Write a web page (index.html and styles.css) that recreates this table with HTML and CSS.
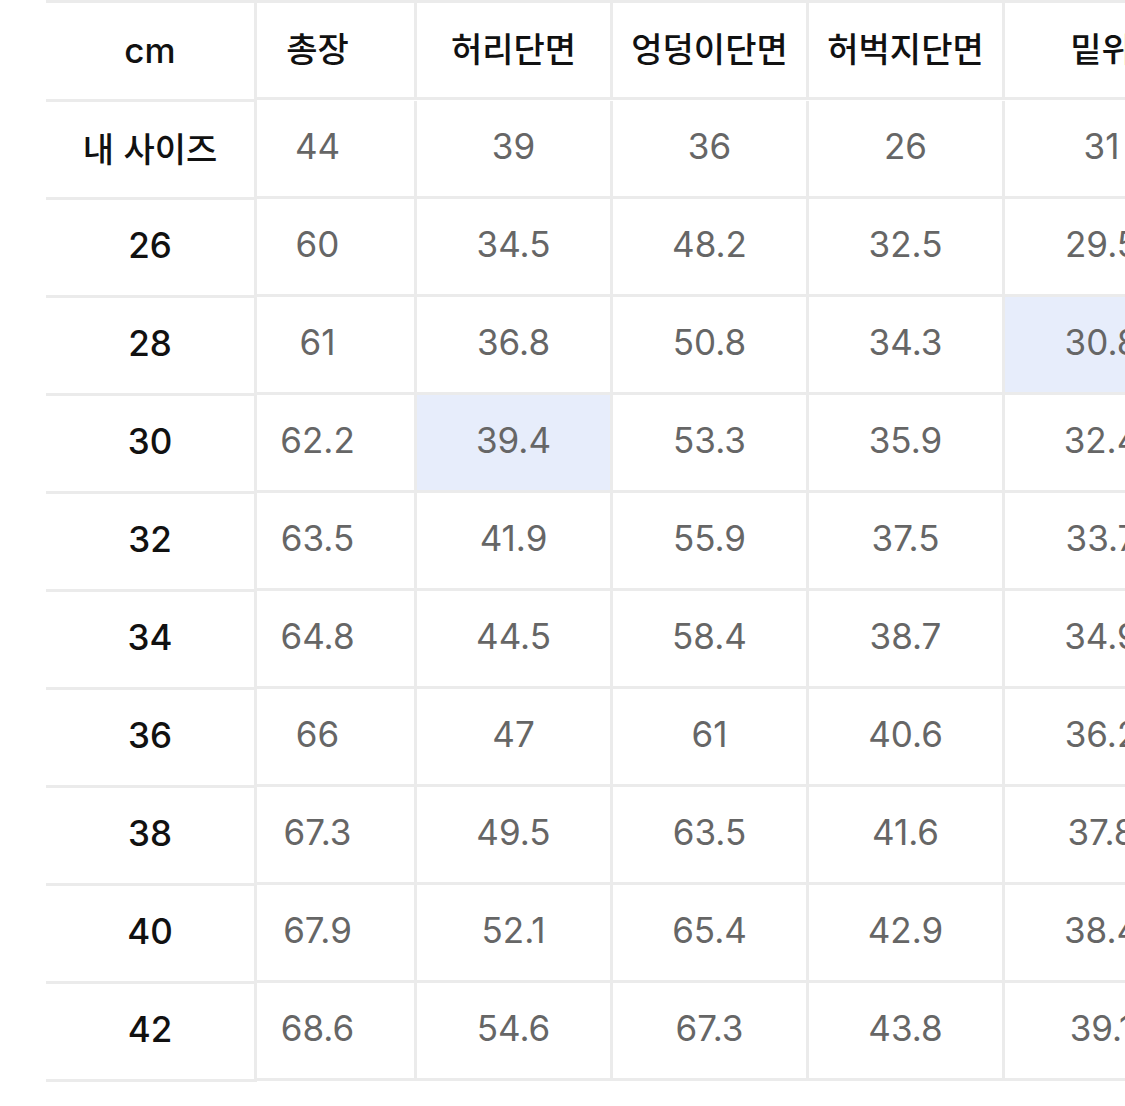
FILE: index.html
```html
<!DOCTYPE html>
<html lang="ko">
<head>
<meta charset="utf-8">
<title>사이즈표</title>
<link rel="stylesheet" href="styles.css">
</head>
<body>
<div class="size-table">
  <div class="fixed-col">
    <div class="cell head">cm</div>
    <div class="cell label kr">내 사이즈</div>
    <div class="cell label">26</div>
    <div class="cell label">28</div>
    <div class="cell label">30</div>
    <div class="cell label">32</div>
    <div class="cell label">34</div>
    <div class="cell label">36</div>
    <div class="cell label">38</div>
    <div class="cell label">40</div>
    <div class="cell label">42</div>
  </div>
  <div class="scroll">
    <div class="grid">
      <div class="dcell head">총장</div><div class="dcell head">허리단면</div><div class="dcell head">엉덩이단면</div><div class="dcell head">허벅지단면</div><div class="dcell head">밑위</div>
      <div class="dcell">44</div><div class="dcell">39</div><div class="dcell">36</div><div class="dcell">26</div><div class="dcell">31</div>
      <div class="dcell">60</div><div class="dcell">34.5</div><div class="dcell">48.2</div><div class="dcell">32.5</div><div class="dcell">29.5</div>
      <div class="dcell">61</div><div class="dcell">36.8</div><div class="dcell">50.8</div><div class="dcell">34.3</div><div class="dcell hl">30.8</div>
      <div class="dcell">62.2</div><div class="dcell hl">39.4</div><div class="dcell">53.3</div><div class="dcell">35.9</div><div class="dcell">32.4</div>
      <div class="dcell">63.5</div><div class="dcell">41.9</div><div class="dcell">55.9</div><div class="dcell">37.5</div><div class="dcell">33.7</div>
      <div class="dcell">64.8</div><div class="dcell">44.5</div><div class="dcell">58.4</div><div class="dcell">38.7</div><div class="dcell">34.9</div>
      <div class="dcell">66</div><div class="dcell">47</div><div class="dcell">61</div><div class="dcell">40.6</div><div class="dcell">36.2</div>
      <div class="dcell">67.3</div><div class="dcell">49.5</div><div class="dcell">63.5</div><div class="dcell">41.6</div><div class="dcell">37.8</div>
      <div class="dcell">67.9</div><div class="dcell">52.1</div><div class="dcell">65.4</div><div class="dcell">42.9</div><div class="dcell">38.4</div>
      <div class="dcell">68.6</div><div class="dcell">54.6</div><div class="dcell">67.3</div><div class="dcell">43.8</div><div class="dcell">39.1</div>
    </div>
  </div>
</div>
</body>
</html>
```

FILE: styles.css
```css
* { box-sizing: border-box; }

html, body {
  margin: 0;
  padding: 0;
  background: #ffffff;
}

body {
  font-family: "Inter", "Noto Sans CJK KR", sans-serif;
  width: 1125px;
  height: 1106px;
  overflow: hidden;
}

.size-table {
  display: flex;
  align-items: flex-start;
  padding-left: 46px;
}

.fixed-col {
  width: 211px;
  flex: none;
  border-top: 3px solid #ebebeb;
  border-right: 3px solid #ebebeb;
}

.cell {
  height: 98px;
  border-bottom: 3px solid #ebebeb;
  display: flex;
  align-items: center;
  justify-content: center;
  padding-bottom: 6px;
  color: #111111;
}

.cell.head {
  height: 99px;
  font-size: 35px;
  font-weight: 500;
  padding-bottom: 2px;
}

.cell.label {
  font-size: 35px;
  font-weight: 500;
}

.cell.label.kr {
  font-family: "Noto Sans CJK KR", sans-serif;
  font-size: 34px;
  font-weight: 500;
  padding-bottom: 4px;
}

.scroll {
  flex: 1;
  overflow: hidden;
}

.grid {
  display: grid;
  grid-template-columns: repeat(5, 196px);
  grid-auto-rows: 98px;
  margin-left: -39px;
  border-top: 3px solid #ebebeb;
  width: max-content;
}

.dcell {
  border-left: 3px solid #ebebeb;
  border-bottom: 3px solid #ebebeb;
  display: flex;
  align-items: center;
  justify-content: center;
  padding-bottom: 6px;
  font-size: 35px;
  color: #666666;
}

.dcell.head {
  height: 97px;
  font-family: "Noto Sans CJK KR", sans-serif;
  font-size: 34px;
  font-weight: 500;
  color: #111111;
  white-space: nowrap;
  padding-bottom: 6px;
}

.grid .dcell:nth-child(-n+5) {
  align-self: start;
}

.dcell.hl {
  background: #e7edfb;
}
```
